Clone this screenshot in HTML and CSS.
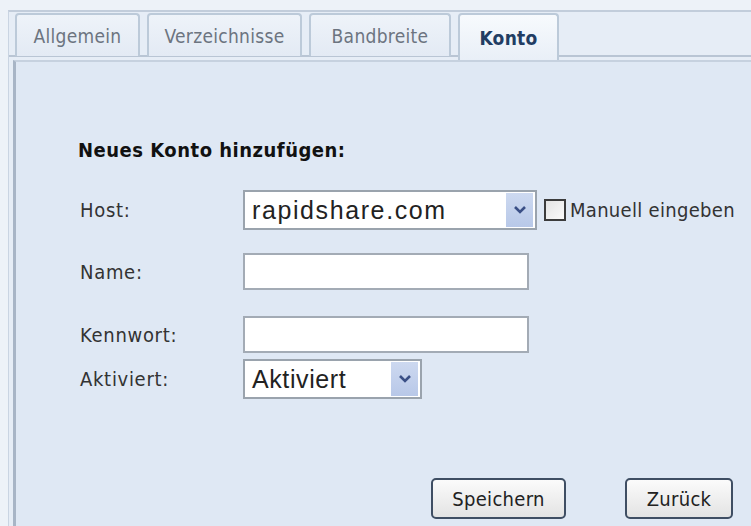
FILE: index.html
```html
<!DOCTYPE html>
<html lang="de">
<head>
<meta charset="utf-8">
<link rel="stylesheet" href="styles.css">
</head>
<body>
<div class="window">
  <div class="frame">
    <div class="tabs">
      <div class="tab">Allgemein</div>
      <div class="tab tab-verz">Verzeichnisse</div>
      <div class="tab tab-band">Bandbreite</div>
      <div class="tab tab-konto active">Konto</div>
    </div>
    <div class="panel">
      <h1 class="heading">Neues Konto hinzufügen:</h1>
      <div class="row row-host">
        <label class="label">Host:</label>
        <div class="select select-host">
          <span class="select-text host-text">rapidshare.com</span>
          <span class="arrow"><svg width="14" height="10" viewBox="0 0 14 10"><path d="M2 2 L7 7 L12 2" fill="none" stroke="#3a4f86" stroke-width="2.6"/></svg></span>
        </div>
        <span class="check"></span>
        <span class="check-label">Manuell eingeben</span>
      </div>
      <div class="row row-name">
        <label class="label">Name:</label>
        <div class="input"></div>
      </div>
      <div class="row row-pass">
        <label class="label">Kennwort:</label>
        <div class="input"></div>
      </div>
      <div class="row row-akt">
        <label class="label">Aktiviert:</label>
        <div class="select select-akt">
          <span class="select-text">Aktiviert</span>
          <span class="arrow"><svg width="14" height="10" viewBox="0 0 14 10"><path d="M2 2 L7 7 L12 2" fill="none" stroke="#3a4f86" stroke-width="2.6"/></svg></span>
        </div>
      </div>
      <div class="buttons">
        <button class="btn btn-save">Speichern</button>
        <button class="btn btn-back">Zurück</button>
      </div>
    </div>
  </div>
</div>
</body>
</html>
```
FILE: styles.css
```css
html, body {
  margin: 0;
  padding: 0;
  width: 751px;
  height: 526px;
  overflow: hidden;
  background: #edf2f8;
}
.window {
  padding: 10px 0 0 8px;
  height: 516px;
}
.frame {
  border-left: 1px solid #c9d4e2;
  border-top: 2px solid #c2cddb;
  height: 514px;
  display: flex;
  flex-direction: column;
  background: #e6edf6;
}
.tabs {
  display: flex;
  padding: 1px 0 0 6px;
  gap: 7px;
  height: 45px;
  border-bottom: 2px solid #b9c5d4;
  box-sizing: border-box;
}
.tab {
  width: 125px;
  height: 43px;
  box-sizing: border-box;
  border: 2px solid #bccad9;
  border-bottom: none;
  border-radius: 4px 4px 0 0;
  background: linear-gradient(#eef3f9, #e3eaf4);
  font-family: "DejaVu Sans Condensed", "DejaVu Sans", sans-serif;
  font-size: 19px;
  color: #6c7480;
  display: flex;
  align-items: center;
  justify-content: center;
  letter-spacing: 0.3px;
}
.tab-verz { width: 155px; }
.tab-band { width: 142px; }
.tab-konto { width: 101px; }
.tab.active {
  height: 47px;
  margin-bottom: -4px;
  background: linear-gradient(#f7fafd, #e9eff7);
  color: #223d63;
  font-weight: bold;
  position: relative;
  z-index: 1;
}
.panel {
  flex: 1;
  margin-top: 3px;
  border-top: 2px solid #c6d1df;
  border-left: 3px solid #a8b5c6;
  margin-left: 4px;
  background: #dfe8f4;
  padding: 0 0 0 62px;
  font-family: "DejaVu Sans Condensed", "DejaVu Sans", sans-serif;
  color: #2c2c2c;
  position: relative;
}
.heading {
  margin: 76px 0 0 0;
  font-size: 20px;
  font-weight: bold;
  color: #111;
  letter-spacing: 0.5px;
  height: 27px;
}
.row {
  display: flex;
  align-items: center;
}
.label {
  width: 163px;
  font-size: 20px;
  color: #333;
  padding-left: 2px;
  letter-spacing: 0.7px;
}
.row-host { margin-top: 25px; height: 40px; }
.row-name { margin-top: 23px; height: 37px; }
.row-pass { margin-top: 26px; height: 37px; }
.row-akt { margin-top: 6px; height: 40px; }
.select {
  height: 40px;
  box-sizing: border-box;
  border: 2px solid #9aa3ad;
  background: #fff;
  display: flex;
  align-items: center;
  justify-content: space-between;
  padding: 0 2px 0 7px;
}
.select-host { width: 294px; }
.select-akt { width: 179px; }
.select-text {
  font-family: "Liberation Sans", Arial, sans-serif;
  font-size: 25px;
  color: #222;
  letter-spacing: 0.6px;
}
.host-text { letter-spacing: 1.6px; }
.arrow {
  width: 27px;
  height: 34px;
  background: linear-gradient(#cdd9f0, #b8c8e8);
  display: flex;
  align-items: center;
  justify-content: center;
}
.check {
  width: 22px;
  height: 22px;
  box-sizing: border-box;
  border: 2px solid #3c3c3c;
  background: linear-gradient(135deg, #e4e4e4, #fafafa);
  margin-left: 7px;
}
.check-label {
  font-size: 20px;
  margin-left: 4px;
  color: #333;
  letter-spacing: 0.3px;
}
.input {
  width: 286px;
  height: 37px;
  box-sizing: border-box;
  border: 2px solid #a3abb5;
  background: #fff;
}
.buttons {
  display: flex;
  margin: 79px 0 0 353px;
  gap: 59px;
}
.btn {
  height: 41px;
  box-sizing: border-box;
  border: 2px solid #3f4e63;
  border-radius: 5px;
  background: linear-gradient(#fbfbfb, #e3e3e3);
  font-family: "DejaVu Sans Condensed", "DejaVu Sans", sans-serif;
  font-size: 20px;
  color: #222;
  padding: 0;
  letter-spacing: 0.3px;
}
.btn-save { width: 135px; }
.btn-back { width: 108px; }
```
